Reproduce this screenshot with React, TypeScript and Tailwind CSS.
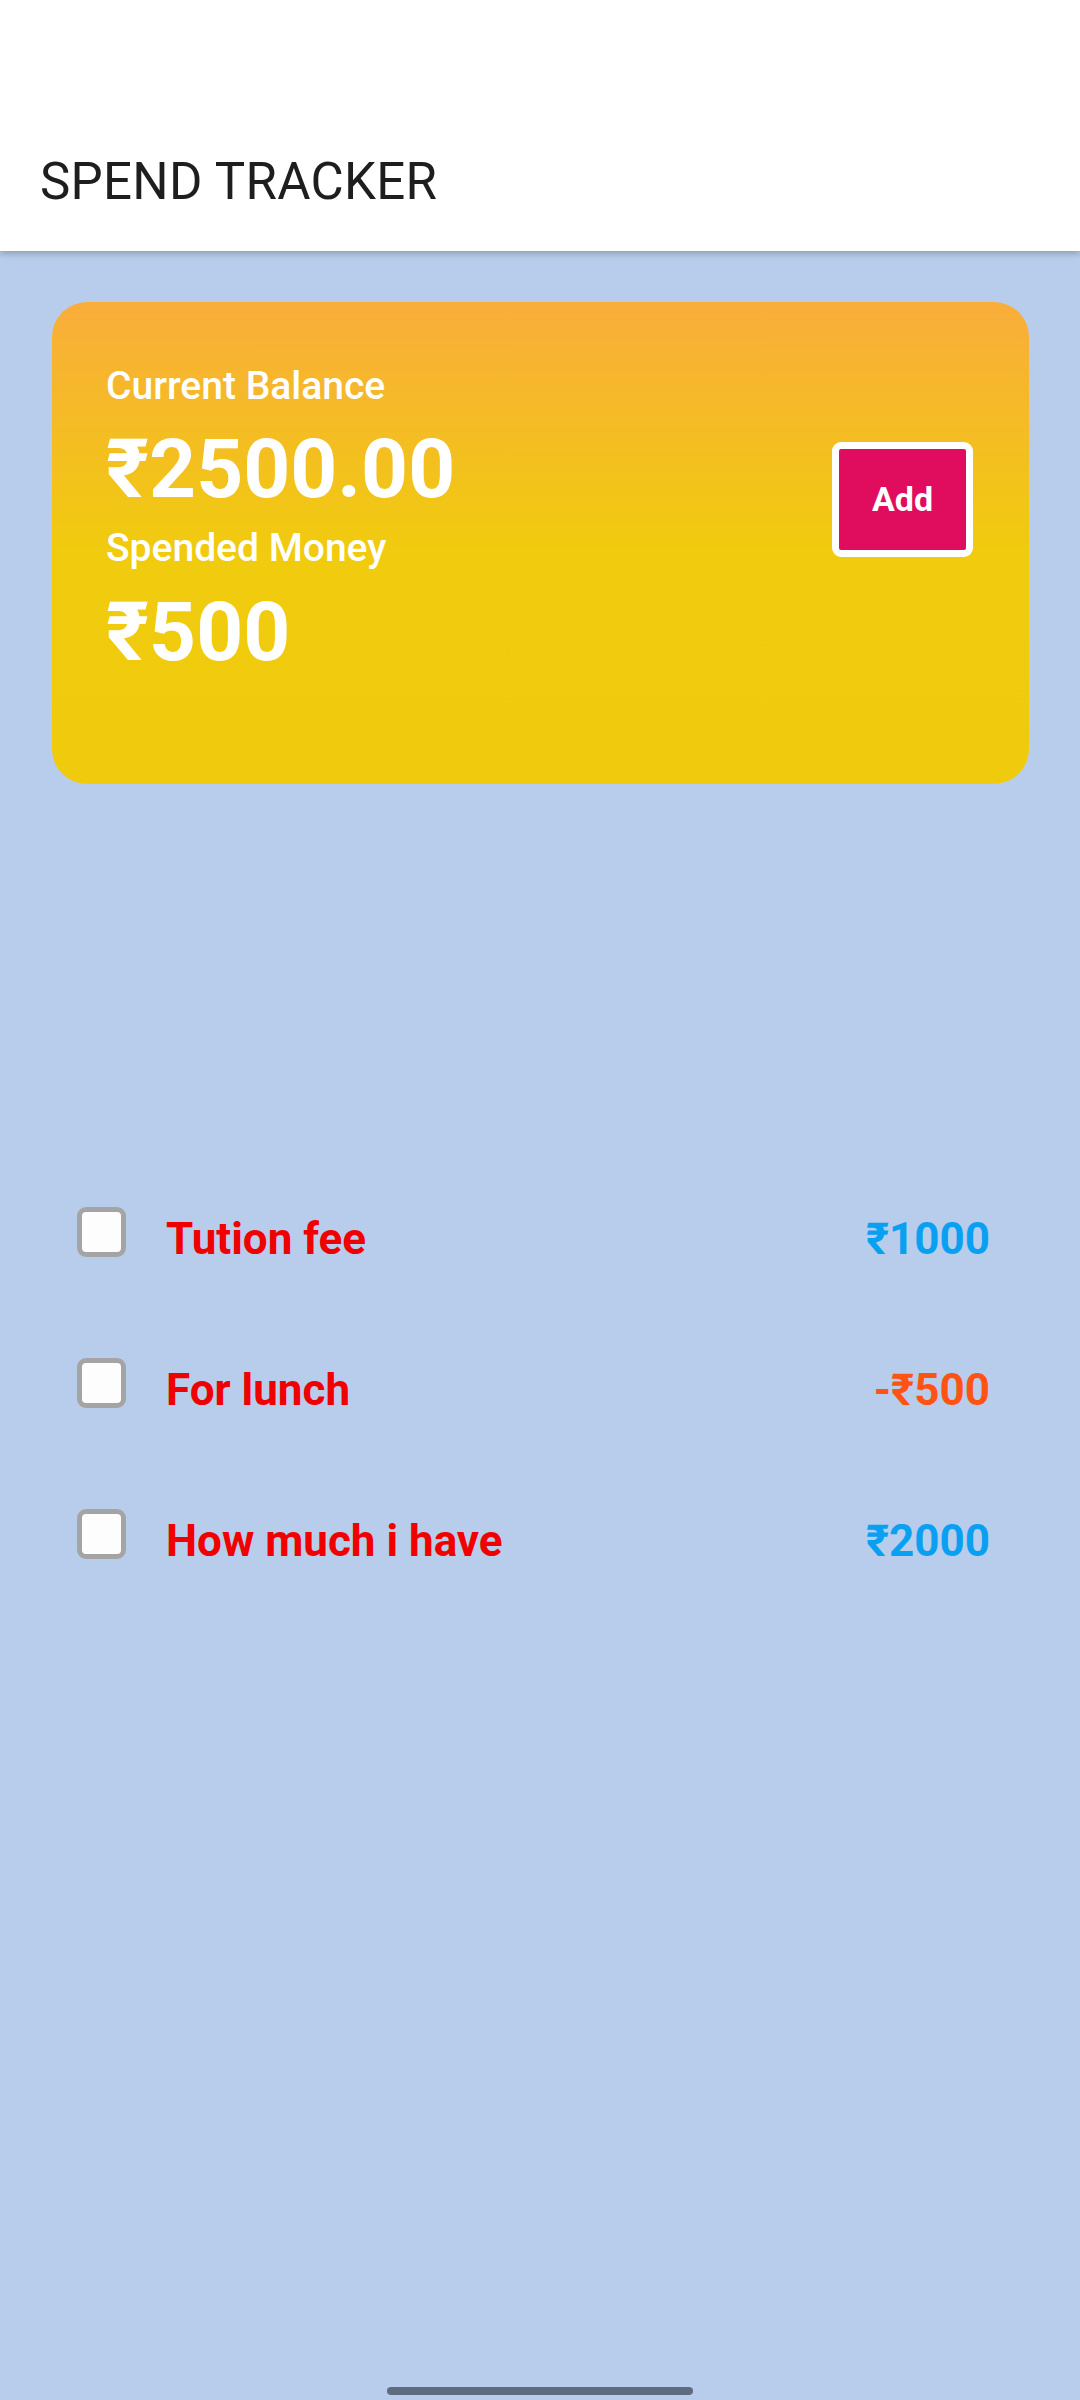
import React from "react";

const items = [
  { label: "Tution fee", amount: "₹1000", color: "text-[#0AA0F2]" },
  { label: "For lunch", amount: "-₹500", color: "text-[#FF5314]" },
  { label: "How much i have", amount: "₹2000", color: "text-[#0AA0F2]" },
];

export default function App() {
  return (
    <div
      className="h-[2400px] w-[1080px] flex flex-col bg-[#B8CDEB] overflow-hidden"
      style={{ fontFamily: "Roboto, 'Noto Sans', 'DejaVu Sans', sans-serif" }}
    >
      <header className="h-[251px] bg-white pt-[156px] pl-[40px] shadow-[0_3px_6px_rgba(0,0,0,0.22)] relative z-10">
        <h1 className="text-[51px] leading-none font-normal text-[#1E1E1E] tracking-[0.3px]">
          SPEND TRACKER
        </h1>
      </header>

      <main className="flex-1 flex flex-col">
        <section className="mt-[51px] ml-[52px] mr-[51px] h-[482px] rounded-[35px] bg-[linear-gradient(180deg,#F9AD3B_0%,#F0CB0E_52%,#F0CB0D_100%)] flex justify-between pl-[54px] pr-[56px] pt-[65px]">
          <div className="flex flex-col text-white">
            <div className="text-[39px] leading-none font-medium">Current Balance</div>
            <div className="mt-[22px] text-[82px] leading-none font-bold">₹2500.00</div>
            <div className="mt-[19px] text-[39px] leading-none font-medium">Spended Money</div>
            <div className="mt-[23px] text-[82px] leading-none font-bold">₹500</div>
          </div>
          <div className="mt-[75px]">
            <button className="w-[141px] h-[115px] border-[7px] border-white rounded-[9px] bg-[#E00D5E] text-white text-[34px] font-bold flex items-center justify-center">
              Add
            </button>
          </div>
        </section>

        <ul className="mt-[423px] flex flex-col">
          {items.map((it) => (
            <li key={it.label} className="h-[151px] flex items-start pl-[77px] pr-[90px]">
              <div className="w-[49px] h-[50px] rounded-[9px] border-[5px] border-[#A4A4A4] bg-[#FDFDFD] shrink-0" />
              <div className="ml-[40px] mt-[10px] flex-1 text-[44px] leading-none font-bold text-[#F00000]">
                {it.label}
              </div>
              <div className={`mt-[10px] text-[44px] leading-none font-bold ${it.color}`}>
                {it.amount}
              </div>
            </li>
          ))}
        </ul>
      </main>

      <div className="flex justify-center pb-[5px]">
        <div className="w-[306px] h-[8px] rounded-full bg-[#5F6B7E]" />
      </div>
    </div>
  );
}
